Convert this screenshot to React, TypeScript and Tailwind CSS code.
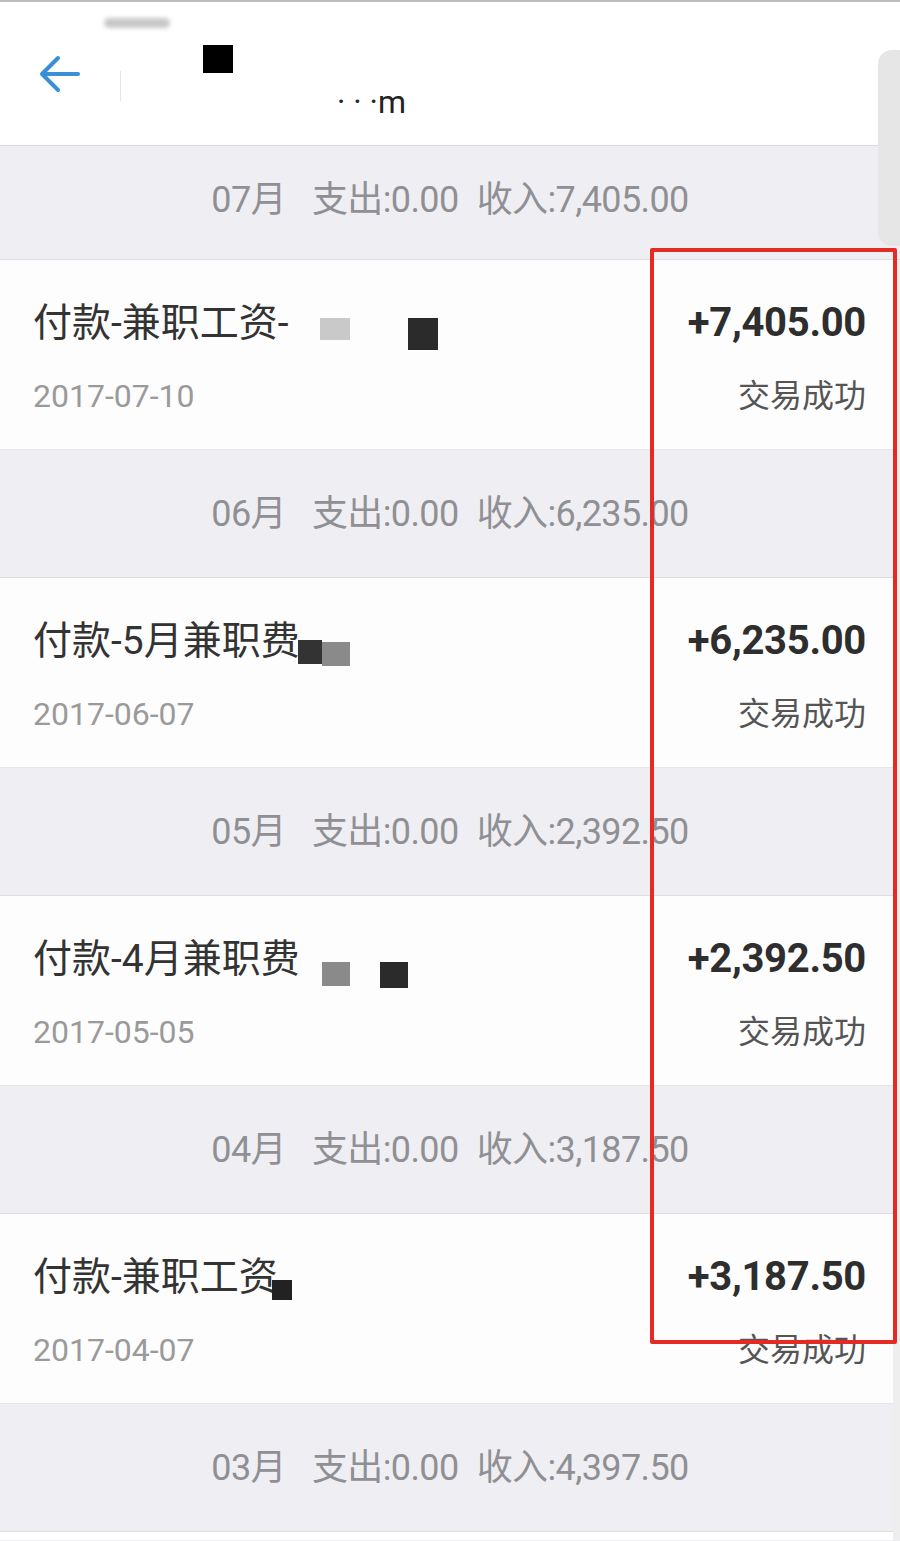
import React from 'react';

type Item = {
  month: string;
  income: string;
  title: string;
  date: string;
  amount: string;
  marks: { x: number; y: number; w: number; h: number; c: string }[];
};

const items: Item[] = [
  {
    month: '07月',
    income: '7,405.00',
    title: '付款-兼职工资-',
    date: '2017-07-10',
    amount: '+7,405.00',
    marks: [
      { x: 320, y: 318, w: 30, h: 22, c: '#c9c9c9' },
      { x: 408, y: 318, w: 30, h: 32, c: '#2b2b2b' },
    ],
  },
  {
    month: '06月',
    income: '6,235.00',
    title: '付款-5月兼职费',
    date: '2017-06-07',
    amount: '+6,235.00',
    marks: [
      { x: 298, y: 640, w: 24, h: 24, c: '#333' },
      { x: 322, y: 642, w: 28, h: 24, c: '#8a8a8a' },
    ],
  },
  {
    month: '05月',
    income: '2,392.50',
    title: '付款-4月兼职费',
    date: '2017-05-05',
    amount: '+2,392.50',
    marks: [
      { x: 322, y: 962, w: 28, h: 24, c: '#8a8a8a' },
      { x: 380, y: 962, w: 28, h: 26, c: '#2b2b2b' },
    ],
  },
  {
    month: '04月',
    income: '3,187.50',
    title: '付款-兼职工资',
    date: '2017-04-07',
    amount: '+3,187.50',
    marks: [{ x: 272, y: 1280, w: 20, h: 20, c: '#222' }],
  },
];

const font = { fontFamily: 'Roboto, "Noto Sans CJK SC", sans-serif' };

function MonthBar({ month, income, first }: { month: string; income: string; first?: boolean }) {
  return (
    <div
      className={`flex items-center justify-center bg-[#efeff3] border-b border-[#dedee2] ${
        first ? 'h-[114px] pb-[6px]' : 'h-[128px]'
      }`}
    >
      <span className="text-[36px] text-[#909094] tracking-[-0.6px]">
        {month}
        <span className="ml-[26px]">支出:0.00</span>
        <span className="ml-[18px]">收入:{income}</span>
      </span>
    </div>
  );
}

function Row({ item }: { item: Item }) {
  return (
    <div className="h-[190px] bg-[#fdfdfd] flex justify-between pl-[33px] pr-[34px] pt-[40px] border-b border-[#e6e6e8]">
      <div className="flex flex-col">
        <span className="text-[39px] leading-[46px] text-[#333]">{item.title}</span>
        <span className="mt-[30px] text-[32px] leading-[40px] text-[#9a9a9a]">{item.date}</span>
      </div>
      <div className="flex flex-col items-end">
        <span className="text-[40px] leading-[46px] font-bold text-[#2e2e2e] tracking-[-0.3px]">{item.amount}</span>
        <span className="mt-[30px] text-[32px] leading-[40px] text-[#555]">交易成功</span>
      </div>
    </div>
  );
}

export default function App() {
  return (
    <div className="relative w-[900px] h-[1541px] bg-[#efeff3] overflow-hidden" style={font}>
      <div className="h-[146px] bg-white border-t-2 border-[#bdbdbd] border-b border-b-[#d8d8dc] flex items-center pl-[38px]">
        <svg width="44" height="40" viewBox="0 0 44 40" fill="none" stroke="#3a8fd6" strokeWidth="4" strokeLinecap="round" strokeLinejoin="round">
          <path d="M40 20H5" />
          <path d="M20 4L4 20L20 36" />
        </svg>
        <div className="ml-[38px] w-px h-[30px] bg-[#e4e4e4] mt-[24px]" />
        <div className="ml-[82px] mb-[30px] w-[30px] h-[28px] bg-black" />
        <span className="ml-[104px] mt-[56px] text-[32px] text-[#222]">· · ·m</span>
      </div>

      {items.map((it, i) => (
        <React.Fragment key={it.month}>
          <MonthBar month={it.month} income={it.income} first={i === 0} />
          <Row item={it} />
        </React.Fragment>
      ))}
      <MonthBar month="03月" income="4,397.50" />
      <div className="h-[8px] bg-white" />

      {/* redaction marks */}
      <div className="absolute left-[104px] top-[18px] w-[66px] h-[10px] rounded-full bg-[#c8c8c8] blur-[2px]" />
      {items.map((it) =>
        it.marks.map((m, j) => (
          <div
            key={it.month + j}
            className="absolute"
            style={{ left: m.x, top: m.y, width: m.w, height: m.h, background: m.c }}
          />
        ))
      )}

      {/* edge scroll handle */}
      <div className="absolute right-0 top-[50px] w-[22px] h-[196px] rounded-l-[14px] bg-[#e6e6e6]" />
      <div className="absolute right-0 top-[260px] w-[7px] h-[1280px] bg-[#eeeeee]" />

      {/* red highlight box */}
      <div className="absolute left-[650px] top-[248px] w-[247px] h-[1096px] border-[4px] border-[#e42a22] rounded-[2px]" />
    </div>
  );
}
